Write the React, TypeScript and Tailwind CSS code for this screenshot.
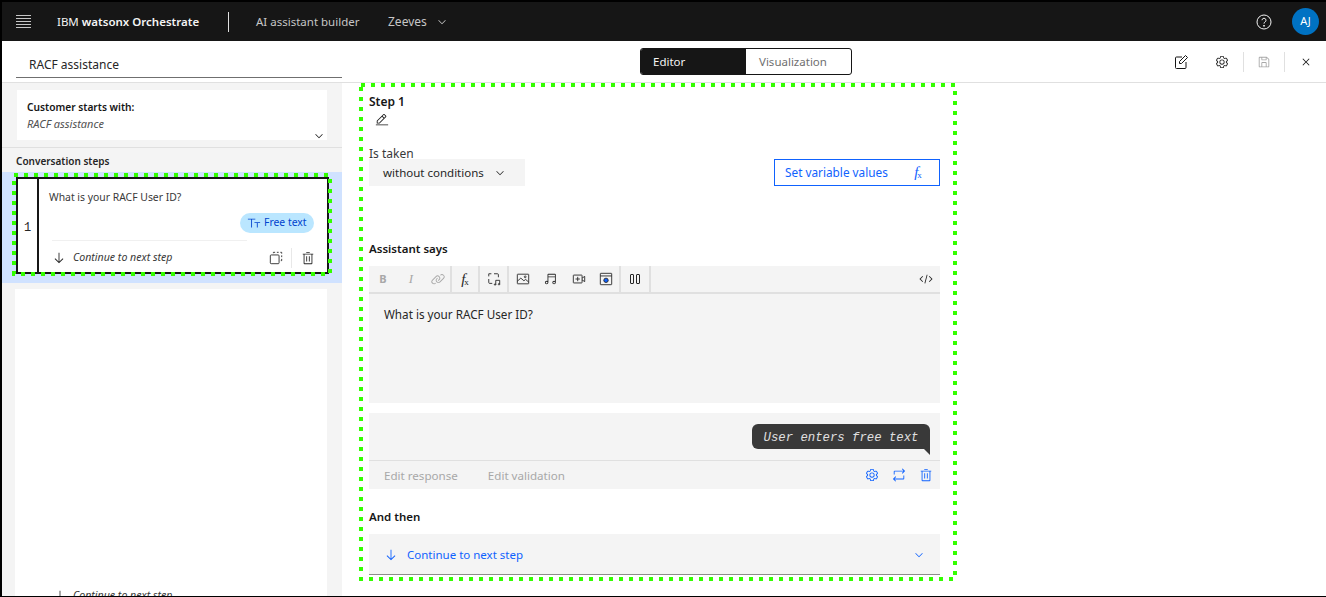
import React from 'react';

const font = { fontFamily: '"Noto Sans", sans-serif' };

type IconProps = { d: string; size?: number; className?: string };

const Icon = ({ d, size = 16, className = '' }: IconProps) => (
  <svg viewBox="0 0 32 32" width={size} height={size} fill="currentColor" className={`shrink-0 ${className}`}>
    <path d={d} />
  </svg>
);

const paths = {
  chevron: 'M16 22L6 12l1.4-1.4 8.6 8.6 8.6-8.6L26 12z',
  arrow: 'M24.59 16.59L17 24.17V4h-2v20.17l-7.59-7.58L6 18l10 10 10-10-1.41-1.41z',
  close: 'M24 9.4L22.6 8 16 14.6 9.4 8 8 9.4 14.6 16 8 22.6 9.4 24 16 17.4 22.6 24 24 22.6 17.4 16 24 9.4z',
  pencil: 'M2 26h28v2H2zM25.4 9c.8-.8.8-2 0-2.8l-3.6-3.6c-.8-.8-2-.8-2.8 0l-15 15V24h6.4l15-15zm-5-5L24 7.6l-3 3L17.4 7l3-3zM6 22v-3.6l10-10 3.6 3.6-10 10H6z',
  trash: 'M12 12h2v12h-2zM18 12h2v12h-2zM4 6v2h2v20a2 2 0 0 0 2 2h16a2 2 0 0 0 2-2V8h2V6zm4 22V8h16v20zM12 2h8v2h-8z',
  gear: 'M27,16.76c0-.25,0-.5,0-.76s0-.51,0-.77l1.92-1.68A2,2,0,0,0,29.3,11L26.94,7a2,2,0,0,0-1.73-1,2,2,0,0,0-.64.1l-2.43.82a11.35,11.35,0,0,0-1.31-.75l-.51-2.52a2,2,0,0,0-2-1.61H13.64a2,2,0,0,0-2,1.61l-.51,2.52a11.48,11.48,0,0,0-1.32.75L7.43,6.06A2,2,0,0,0,6.79,6,2,2,0,0,0,5.06,7L2.7,11a2,2,0,0,0,.41,2.51L5,15.24c0,.25,0,.5,0,.76s0,.51,0,.77L3.11,18.45A2,2,0,0,0,2.7,21L5.06,25a2,2,0,0,0,1.73,1,2,2,0,0,0,.64-.1l2.43-.82a11.35,11.35,0,0,0,1.31.75l.51,2.52a2,2,0,0,0,2,1.61h4.72a2,2,0,0,0,2-1.61l.51-2.52a11.48,11.48,0,0,0,1.32-.75l2.42.82a2,2,0,0,0,.64.1,2,2,0,0,0,1.73-1L29.3,21a2,2,0,0,0-.41-2.51ZM25.21,24l-3.43-1.16a8.86,8.86,0,0,1-2.71,1.57L18.36,28H13.64l-.71-3.55a9.36,9.36,0,0,1-2.7-1.57L6.79,24,4.43,20l2.72-2.4a8.9,8.9,0,0,1,0-3.13L4.43,12,6.79,8l3.43,1.16a8.86,8.86,0,0,1,2.71-1.57L13.64,4h4.72l.71,3.55a9.36,9.36,0,0,1,2.7,1.57L25.21,8,27.57,12l-2.72,2.4a8.9,8.9,0,0,1,0,3.13L27.57,20ZM16,22a6,6,0,1,1,6-6A5.94,5.94,0,0,1,16,22Zm0-10a3.91,3.91,0,0,0-4,4,3.91,3.91,0,0,0,4,4,3.91,3.91,0,0,0,4-4A3.91,3.91,0,0,0,16,12Z',
  save: 'M27.71 9.29l-5-5A1 1 0 0 0 22 4H6a2 2 0 0 0-2 2v20a2 2 0 0 0 2 2h20a2 2 0 0 0 2-2V10a1 1 0 0 0-.29-.71zM12 6h8v4h-8zm8 20h-8v-8h8zm2 0v-8a2 2 0 0 0-2-2h-8a2 2 0 0 0-2 2v8H6V6h4v4a2 2 0 0 0 2 2h8a2 2 0 0 0 2-2V6.41l4 4V26z',
  repeat: 'M6,6H26.17l-3.58-3.59L24,1l6,6-6,6-1.41-1.41L26.17,8H6v7H4V8A2,2,0,0,1,6,6ZM26,26H5.83l3.58,3.59L8,31,2,25l6-6,1.41,1.41L5.83,24H26V17h2v7A2,2,0,0,1,26,26Z',
  link: 'M29.25 6.76a6 6 0 0 0-8.5 0l1.42 1.42a4 4 0 1 1 5.67 5.67l-8 8a4 4 0 1 1-5.67-5.66l1.41-1.42-1.41-1.42-1.42 1.42a6 6 0 0 0 0 8.5A6 6 0 0 0 17 25a6 6 0 0 0 4.27-1.76l8-8a6 6 0 0 0-.02-8.48zM4.19 24.82a4 4 0 0 1 0-5.67l8-8a4 4 0 0 1 5.67 0A3.94 3.94 0 0 1 19 14a4 4 0 0 1-1.17 2.85L15.71 19l1.42 1.42 2.12-2.12a6 6 0 0 0-8.51-8.51l-8 8a6 6 0 0 0 0 8.51A6 6 0 0 0 7 28a6.07 6.07 0 0 0 4.28-1.76l-1.42-1.42a4 4 0 0 1-5.67 0z',
  music: 'M25 4H10a2 2 0 0 0-2 2v14.556A3.955 3.955 0 0 0 6 20a4 4 0 1 0 4 4V12h15v8.556A3.954 3.954 0 0 0 23 20a4 4 0 1 0 4 4V6a2 2 0 0 0-2-2zM6 26a2 2 0 1 1 2-2 2.002 2.002 0 0 1-2 2zm17 0a2 2 0 1 1 2-2 2.003 2.003 0 0 1-2 2zM10 6h15v4H10z',
  code: 'M31 16l-7 7-1.41-1.41L28.17 16l-5.58-5.59L24 9l7 7zM1 16l7-7 1.41 1.41L3.83 16l5.58 5.59L8 23l-7-7zM12.419 25.484L17.639 6l1.932.518L14.35 26z',
  textFont: 'M2 6h17v2h-7.5v18h-2V8H2zM17 14h13v2h-5.5v10h-2V16H17z',
};

// hand drawn ones, carbon has no exact match in the packages
const Stroke = ({ children, size = 16, className = '' }: { children: React.ReactNode; size?: number; className?: string }) => (
  <svg viewBox="0 0 16 16" width={size} height={size} fill="none" stroke="currentColor" strokeWidth="1" className={`shrink-0 ${className}`}>
    {children}
  </svg>
);

const DocEdit = () => (
  <Stroke className="text-[#161616]">
    <path d="M9 3H3.5a1 1 0 0 0-1 1v9.5a1 1 0 0 0 1 1H12a1 1 0 0 0 1-1V8" />
    <path d="M6.5 9.5v-2L12.5 1.5l2 2-6 6z" />
  </Stroke>
);

const Fx = ({ className = '' }: { className?: string }) => (
  <span className={`flex w-4 justify-center items-end leading-none ${className}`} style={{ fontFamily: '"Liberation Serif", serif' }}>
    <span className="italic text-[15px]">f</span>
    <span className="text-[9px] -ml-px">x</span>
  </span>
);

const DashedBox = ({ w, h, className }: { w: number; h: number; className: string }) => (
  <svg width={w} height={h} fill="none" className={`absolute pointer-events-none ${className}`}>
    <rect x="2" y="2" width={w - 4} height={h - 4} stroke="#33ff00" strokeWidth="4" strokeDasharray="4 6" />
  </svg>
);

const ToolCell = ({ className, children }: { className: string; children: React.ReactNode }) => (
  <div className={`flex h-full items-center justify-center ${className}`}>{children}</div>
);

export default function App() {
  return (
    <div style={font} className="relative flex h-[597px] w-[1326px] flex-col overflow-hidden border-b border-l-2 border-black bg-white text-[#161616]">
      <header className="flex h-[41px] shrink-0 items-center border-t-2 border-black bg-[#161616] text-[#f4f4f4] -ml-0.5 pl-0.5">
        <div className="ml-[14px] flex w-[15px] flex-col gap-[2px]">
          <div className="h-px bg-[#c6c6c6]" />
          <div className="h-px bg-[#c6c6c6]" />
          <div className="h-px bg-[#c6c6c6]" />
          <div className="h-px bg-[#c6c6c6]" />
          <div className="h-px bg-[#c6c6c6]" />
        </div>
        <div className="ml-[26px] w-[171px] text-[11.5px] whitespace-nowrap">
          IBM <span className="font-semibold">watsonx Orchestrate</span>
        </div>
        <div className="h-[20px] w-px bg-[#e0e0e0]" />
        <div className="ml-[27px] w-[132px] text-[11.5px] text-[#c6c6c6] whitespace-nowrap">AI assistant builder</div>
        <div className="text-[12px] text-[#c6c6c6]">Zeeves</div>
        <Icon d={paths.chevron} size={12} className="ml-[9px] text-[#c6c6c6]" />
        <div className="ml-auto flex items-center">
          <svg viewBox="0 0 16 16" width="16" height="16" fill="none" stroke="currentColor" className="mr-[20px]">
            <circle cx="8" cy="8" r="7" />
            <path d="M6 6.2a2 2 0 1 1 3 1.8c-.7.4-1 .8-1 1.6" />
            <circle cx="8" cy="11.8" r=".5" fill="currentColor" />
          </svg>
          <div className="mr-[7px] flex h-[27px] w-[27px] items-center justify-center rounded-full bg-[#0072c3] text-[11px] text-white">AJ</div>
        </div>
      </header>

      <div className="flex h-[42px] shrink-0 border-b border-[#e0e0e0]">
        <div className="ml-[14px] h-[37px] w-[326px] border-b border-[#6f6f6f] pl-[13px] pt-[14px] text-[12px] leading-[20px] text-[#262626]">RACF assistance</div>
        <div className="ml-[298px] mt-[7px] flex h-[27px] w-[212px] overflow-hidden rounded-[3px] border border-[#161616] text-[11.5px]">
          <div className="flex w-[105px] items-center bg-[#161616] pl-[12px] text-[#f4f4f4]">Editor</div>
          <div className="flex items-center pl-[13px] text-[#6f6f6f]">Visualization</div>
        </div>
        <div className="ml-auto mr-[13px] flex h-[41px] items-center">
          <DocEdit />
          <Icon d={paths.gear} size={14} className="ml-[26px] text-[#262626]" />
          <div className="ml-[14px] h-[20px] w-px bg-[#e0e0e0]" />
          <Icon d={paths.save} size={14} className="ml-[13px] text-[#a8a8a8]" />
          <div className="ml-[13px] h-[20px] w-px bg-[#e0e0e0]" />
          <Icon d={paths.close} size={14} className="ml-[14px] text-[#161616]" />
        </div>
      </div>

      <div className="flex min-h-0 flex-1">
        <aside className="flex w-[340px] shrink-0 flex-col overflow-hidden bg-[#f4f4f4]">
          <div className="shrink-0 border-b border-[#e0e0e0] pb-[7px] pt-[7px]">
            <div className="ml-[15px] flex h-[50px] w-[310px] flex-col bg-white pl-[10px] pt-[10px]">
              <div className="text-[10.2px] font-semibold leading-[14px]">Customer starts with:</div>
              <div className="mt-[3px] text-[11px] italic leading-[14px] text-[#525252]">RACF assistance</div>
              <Icon d={paths.chevron} size={12} className="ml-[286px] -mt-px text-[#161616]" />
            </div>
          </div>
          <div className="h-[24px] shrink-0 pl-[14px] pt-[6px] text-[10px] font-semibold leading-[14px] text-[#262626]">Conversation steps</div>
          <div className="relative h-[111px] shrink-0 bg-[#d0e2ff] pl-[14px] pt-[5px]">
            <div className="flex h-[97px] w-[313px] border-2 border-[#161616] bg-white">
              <div className="flex w-[21px] items-center justify-center border-r-2 border-[#161616] pt-[4px] text-[12px] text-[#262626]" style={{ fontFamily: '"Liberation Mono", monospace' }}>1</div>
              <div className="flex min-w-0 flex-1 flex-col">
                <div className="ml-[10px] mt-[11px] text-[10.4px] leading-[14px] text-[#393939]">What is your RACF User ID?</div>
                <div className="mr-[13px] mt-[9px] flex h-[20px] w-[74px] shrink-0 items-center gap-[3px] self-end rounded-full bg-[#bae6ff] pl-[7px] text-[10.4px] text-[#0043ce]">
                  <Icon d={paths.textFont} size={14} />
                  <span className="whitespace-nowrap">Free text</span>
                </div>
                <div className="ml-[13px] mt-[7px] h-px w-[195px] shrink-0 bg-[#f0f0f0]" />
                <div className="flex flex-1 items-center pl-[13px] pt-[2px]">
                  <Icon d={paths.arrow} size={14} className="text-[#262626]" />
                  <span className="ml-[7px] w-[196px] whitespace-nowrap text-[10.6px] italic text-[#393939]">Continue to next step</span>
                  <svg viewBox="0 0 16 16" width="14" height="14" fill="none" stroke="#262626" className="shrink-0">
                    <rect x="1.5" y="4.5" width="10" height="10" rx="1" />
                    <path d="M5 2.5V1.5h2M9 1.5h2M13 1.5h1.5V3M14.5 5v2M14.5 9v2h-1" />
                  </svg>
                  <div className="ml-[8px] h-[20px] w-px bg-[#e8e8e8]" />
                  <Icon d={paths.trash} size={14} className="ml-[9px] text-[#262626]" />
                </div>
              </div>
            </div>
            <DashedBox w={320} h={103} className="left-[10px] top-[1px]" />
          </div>
          <div className="ml-[13px] mt-[6px] h-[320px] w-[312px] shrink-0 bg-white pl-[40px] pt-[299px]">
            <div className="flex items-center text-[10.6px] italic text-[#393939]">
              <Icon d={paths.arrow} size={14} className="-ml-[2px]" />
              <span className="ml-[6px]">Continue to next step</span>
            </div>
          </div>
        </aside>

        <main className="relative min-w-0 flex-1 pl-[27px] pt-[11px]">
          <DashedBox w={598} h={498} className="left-[17px] top-0" />
          <div className="w-[571px]">
            <div className="text-[12px] font-semibold leading-[16px]">Step 1</div>
            <Icon d={paths.pencil} size={14} className="ml-[6px] mt-[3px] text-[#161616]" />
            <div className="mt-[21px] text-[12px] leading-[11px] text-[#393939]">Is taken</div>
            <div className="flex h-[27px] items-center justify-between">
              <div className="flex h-full w-[156px] items-center bg-[#f4f4f4] pl-[14px] text-[11.5px] text-[#262626]">
                without conditions
                <Icon d={paths.chevron} size={12} className="ml-[10px]" />
              </div>
              <div className="flex h-full w-[166px] items-center border border-[#0f62fe] pl-[10px] text-[11.8px] text-[#0f62fe]">
                Set variable values
                <Fx className="ml-auto mr-[13px] text-[#0f62fe]" />
              </div>
            </div>

            <div className="mt-[55px] text-[11.5px] font-semibold leading-[16px]">Assistant says</div>
            <div className="mt-[9px] h-[137px] bg-[#f4f4f4]">
              <div className="flex h-[28px] items-center border-b-2 border-[#e0e0e0]">
                <ToolCell className="w-[28px] text-[11px] font-bold text-[#a8a8a8]">B</ToolCell>
                <ToolCell className="w-[28px] text-[13px] italic text-[#a8a8a8]">
                  <span style={{ fontFamily: '"Liberation Serif", serif' }}>I</span>
                </ToolCell>
                <ToolCell className="w-[27px] border-r-2 border-[#e0e0e0] text-[#a8a8a8]"><Icon d={paths.link} size={14} /></ToolCell>
                <ToolCell className="w-[28px] border-r-2 border-[#e0e0e0] text-[#262626]"><Fx /></ToolCell>
                <ToolCell className="w-[29px] border-r-2 border-[#e0e0e0] text-[#262626]">
                  <Stroke size={14}>
                    <path d="M5 2H2v3M2 8v4a1 1 0 0 0 1 1h3M8 2h4a1 1 0 0 1 1 1v3" />
                    <path d="M10 14.5V9.5h4.5v4.5" />
                    <circle cx="9.2" cy="14.3" r=".8" />
                    <circle cx="13.7" cy="14" r=".8" />
                  </Stroke>
                </ToolCell>
                <ToolCell className="w-[28px] text-[#262626]">
                  <Stroke size={14}>
                    <rect x="1.5" y="2.5" width="13" height="11" rx=".5" />
                    <path d="M1.5 10.5l4-3.5 3.5 3 2-1.5 3.5 3" />
                    <circle cx="10.5" cy="5.5" r="1" />
                  </Stroke>
                </ToolCell>
                <ToolCell className="w-[28px] text-[#262626]"><Icon d={paths.music} size={14} /></ToolCell>
                <ToolCell className="w-[28px] text-[#262626]">
                  <Stroke size={14}>
                    <rect x="1.5" y="3.5" width="10" height="9" rx=".5" />
                    <path d="M6.5 5.5v5M4 8h5M11.5 7l3-2v6l-3-2" />
                  </Stroke>
                </ToolCell>
                <ToolCell className="w-[28px] border-r-2 border-[#e0e0e0] text-[#262626]">
                  <Stroke size={14}>
                    <rect x="1.5" y="1.5" width="13" height="13" rx=".5" />
                    <path d="M1.5 4.5h13" />
                    <circle cx="8" cy="9.5" r="2.5" fill="#0f62fe" stroke="#262626" />
                  </Stroke>
                </ToolCell>
                <ToolCell className="w-[30px] border-r-2 border-[#e0e0e0] text-[#262626]">
                  <div className="flex gap-[2px]">
                    <div className="h-[10px] w-[4px] rounded-[1px] border border-[#262626]" />
                    <div className="h-[10px] w-[4px] rounded-[1px] border border-[#262626]" />
                  </div>
                </ToolCell>
                <Icon d={paths.code} size={14} className="ml-auto mr-[7px] text-[#262626]" />
              </div>
              <div className="pl-[15px] pt-[11px] text-[11.7px] leading-[18px] text-[#262626]">What is your RACF User ID?</div>
            </div>

            <div className="mt-[10px] h-[76px] bg-[#f4f4f4]">
              <div className="flex h-[48px] items-start justify-end border-b border-[#e0e0e0] pr-[10px] pt-[11px]">
                <div className="relative flex h-[25px] w-[178px] items-center justify-center rounded-[6px] rounded-br-none bg-[#393939] pt-[4px] text-[12.3px] italic text-[#e0e0e0]" style={{ fontFamily: '"Liberation Mono", monospace' }}>
                  User enters free text
                  <div className="absolute right-0 top-full h-0 w-0 border-l-[6px] border-t-[6px] border-l-transparent border-t-[#393939]" />
                </div>
              </div>
              <div className="flex h-[28px] items-center pl-[15px] text-[11.6px] text-[#a8a8a8]">
                <span className="pt-[2px]">Edit response</span>
                <span className="ml-[30px] pt-[2px]">Edit validation</span>
                <div className="ml-auto mr-[7px] flex items-center gap-[13px] text-[#0f62fe]">
                  <Icon d={paths.gear} size={14} />
                  <Icon d={paths.repeat} size={14} />
                  <Icon d={paths.trash} size={14} />
                </div>
              </div>
            </div>

            <div className="mt-[20px] text-[11.5px] font-semibold leading-[16px]">And then</div>
            <div className="mt-[9px] flex h-[41px] items-center border-b border-[#8d8d8d] bg-[#f4f4f4] pl-[15px] pt-[2px] text-[11.5px] text-[#0f62fe]">
              <Icon d={paths.arrow} size={14} />
              <span className="ml-[9px]">Continue to next step</span>
              <Icon d={paths.chevron} size={12} className="ml-auto mr-[15px]" />
            </div>
          </div>
        </main>
      </div>
    </div>
  );
}
